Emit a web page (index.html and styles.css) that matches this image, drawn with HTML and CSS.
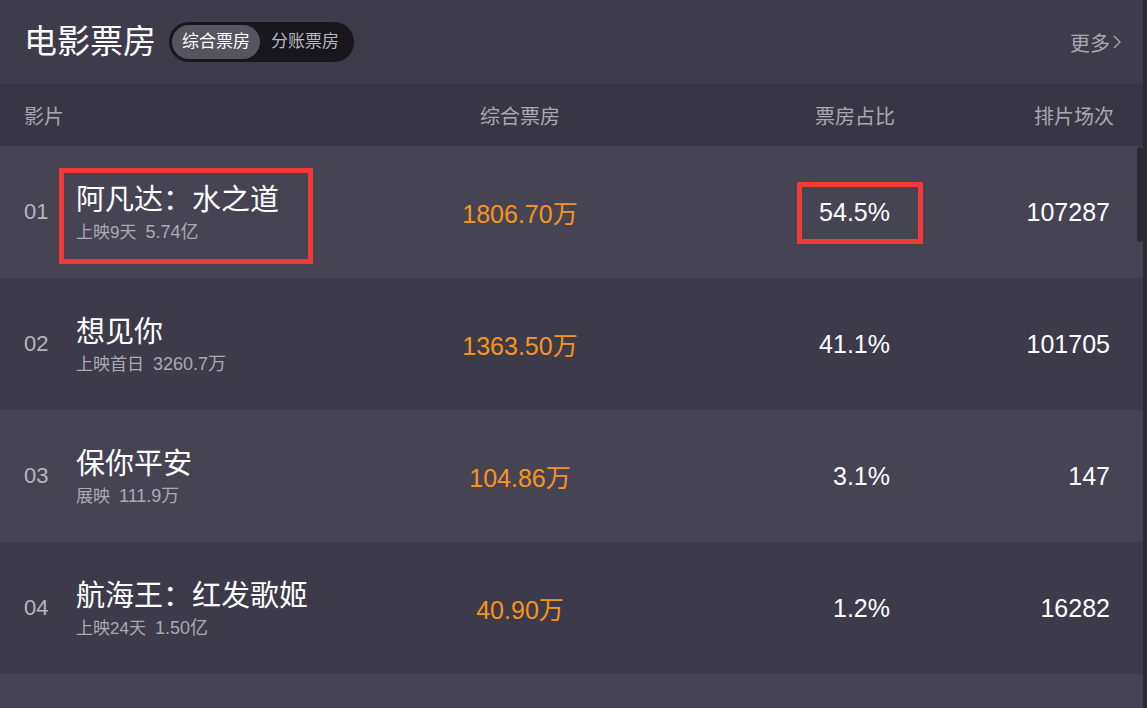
FILE: index.html
```html
<!DOCTYPE html>
<html lang="zh-CN">
<head>
<meta charset="utf-8">
<title>电影票房</title>
<link rel="stylesheet" href="styles.css">
</head>
<body>
<div class="panel">
  <header class="top">
    <div class="top-left">
      <h1 class="title">电影票房</h1>
      <div class="toggle">
        <span class="tab active">综合票房</span>
        <span class="tab">分账票房</span>
      </div>
    </div>
    <a class="more">更多<svg class="chev" width="12" height="20" viewBox="0 0 12 20"><path d="M3 4 L9 10 L3 16" fill="none" stroke="#a9a8b2" stroke-width="1.4"/></svg></a>
  </header>
  <div class="thead">
    <span class="c-name">影片</span>
    <span class="c-box">综合票房</span>
    <span class="c-pct">票房占比</span>
    <span class="c-cnt">排片场次</span>
  </div>
  <div class="row light">
    <span class="rank">01</span>
    <div class="movie">
      <div class="mname">阿凡达：水之道</div>
      <div class="msub"><span>上映9天</span><span class="sum">5.74亿</span></div>
    </div>
    <span class="box">1806.70万</span>
    <span class="pct">54.5%</span>
    <span class="cnt">107287</span>
    <div class="mark mark1"></div>
    <div class="mark mark2"></div>
  </div>
  <div class="row dark">
    <span class="rank">02</span>
    <div class="movie">
      <div class="mname">想见你</div>
      <div class="msub"><span>上映首日</span><span class="sum">3260.7万</span></div>
    </div>
    <span class="box">1363.50万</span>
    <span class="pct">41.1%</span>
    <span class="cnt">101705</span>
  </div>
  <div class="row light">
    <span class="rank">03</span>
    <div class="movie">
      <div class="mname">保你平安</div>
      <div class="msub"><span>展映</span><span class="sum">111.9万</span></div>
    </div>
    <span class="box">104.86万</span>
    <span class="pct">3.1%</span>
    <span class="cnt">147</span>
  </div>
  <div class="row dark">
    <span class="rank">04</span>
    <div class="movie">
      <div class="mname">航海王：红发歌姬</div>
      <div class="msub"><span>上映24天</span><span class="sum">1.50亿</span></div>
    </div>
    <span class="box">40.90万</span>
    <span class="pct">1.2%</span>
    <span class="cnt">16282</span>
  </div>
  <div class="row light"></div>
  <div class="scrollbar"><div class="thumb"></div></div>
</div>
</body>
</html>
```

FILE: styles.css
```css
* { box-sizing: border-box; margin: 0; padding: 0; }
html, body {
  width: 1147px;
  height: 708px;
  overflow: hidden;
  background: #3d3b4a;
  font-family: "Liberation Sans", "Noto Sans CJK SC", sans-serif;
}
.panel {
  position: relative;
  width: 1147px;
  height: 708px;
  overflow: hidden;
}
.top {
  height: 84px;
  display: flex;
  align-items: center;
  justify-content: space-between;
  padding: 0 24px 0 24px;
  background: #3e3c4b;
}
.top-left { display: flex; align-items: center; gap: 13px; }
.title {
  font-size: 33px;
  font-weight: normal;
  color: #ffffff;
  line-height: 40px;
}
.toggle {
  display: flex;
  align-items: center;
  height: 40px;
  padding: 3px;
  border-radius: 20px;
  background: #18171d;
}
.tab {
  height: 34px;
  line-height: 34px;
  padding: 0 10px;
  font-size: 17px;
  color: #b7b6bd;
  border-radius: 17px;
}
.tab.active { background: #56545f; color: #ffffff; }
.tab + .tab { padding: 0 12px 0 11px; }
.more {
  display: flex;
  align-items: center;
  gap: 1px;
  font-size: 20px;
  color: #a9a8b2;
}
.thead, .row {
  display: grid;
  grid-template-columns: 76px 344px 200px 275px 219px;
  align-items: center;
}
.thead {
  height: 62px;
  background: #383644;
  font-size: 20px;
  color: #a8a7b1;
  padding-left: 24px;
  grid-template-columns: 396px 200px 275px 219px;
}
.thead .c-box { text-align: center; }
.thead .c-pct, .thead .c-cnt { text-align: right; }
.row {
  position: relative;
  height: 132px;
}
.row.light { background: #464453; }
.row.dark { background: #3d3b49; }
.rank {
  padding-left: 24px;
  font-size: 22px;
  color: #b6b5be;
}
.mname {
  font-size: 29px;
  line-height: 40px;
  color: #ffffff;
}
.msub {
  display: flex;
  align-items: baseline;
  font-size: 17px;
  line-height: 24px;
  color: #aaa9b3;
}
.msub .sum { margin-left: 9px; font-size: 18px; }
.box {
  text-align: center;
  font-size: 25px;
  color: #f7941e;
}
.pct, .cnt {
  text-align: right;
  font-size: 25px;
  color: #ffffff;
}
.pct { padding-right: 5px; }
.cnt { padding-right: 4px; }
.mark {
  position: absolute;
  border: 5px solid #f23a3a;
}
.mark1 { left: 59px; top: 22px; width: 254px; height: 96px; }
.mark2 { left: 797px; top: 36px; width: 126px; height: 62px; }
.scrollbar {
  position: absolute;
  top: 0;
  right: 0;
  width: 4px;
  height: 708px;
  background: #2b2a33;
}
.thumb {
  position: absolute;
  top: 147px;
  right: 4px;
  width: 6px;
  height: 95px;
  border-radius: 3px;
  background: #2b2a33;
}
```
